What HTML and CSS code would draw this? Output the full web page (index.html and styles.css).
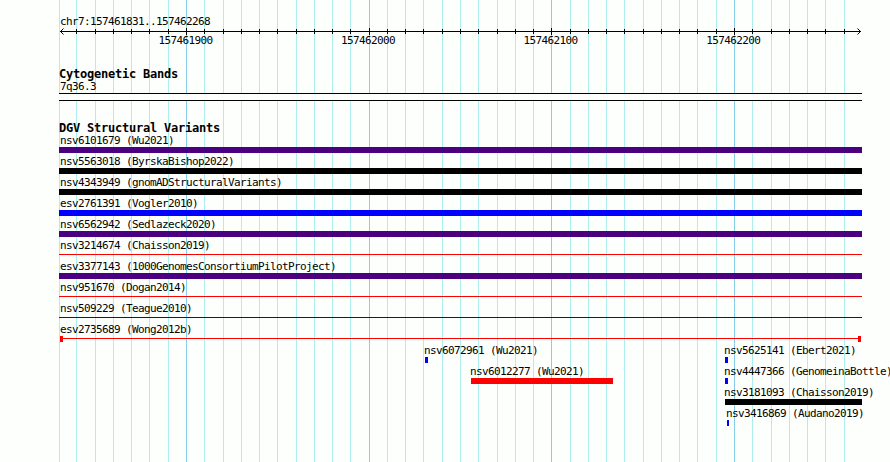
FILE: index.html
```
<!DOCTYPE html>
<html lang="en">
  <head>
    <meta charset="UTF-8" />
    <title>chr7:157461831..157462268</title>
    <link rel="stylesheet" href="styles.css">
  </head>
  <body>
    <div class="browser">
      <svg class="grid" width="890" height="462" shape-rendering="crispEdges">
        <path class="minor" d="M59.5 0V462M76.5 0V462M95.5 0V462M113.5 0V462M131.5 0V462M149.5 0V462M168.5 0V462M204.5 0V462M223.5 0V462M241.5 0V462M259.5 0V462M277.5 0V462M296.5 0V462M314.5 0V462M332.5 0V462M350.5 0V462M387.5 0V462M405.5 0V462M423.5 0V462M442.5 0V462M460.5 0V462M478.5 0V462M497.5 0V462M515.5 0V462M533.5 0V462M570.5 0V462M588.5 0V462M606.5 0V462M624.5 0V462M643.5 0V462M661.5 0V462M679.5 0V462M697.5 0V462M716.5 0V462M752.5 0V462M771.5 0V462M789.5 0V462M807.5 0V462M825.5 0V462M844.5 0V462" />
        <path class="major" d="M186.5 0V462M369.5 0V462M551.5 0V462M734.5 0V462" />
      </svg>

      <div class="tracks">
        <div class="region">chr7:157461831..157462268</div>
        <svg class="ruler" width="803" height="8" shape-rendering="crispEdges">
          <path d="M1 3.5H802" />
          <path d="M17.5 1V6M36.5 1V6M54.5 1V6M72.5 1V6M90.5 1V6M109.5 1V6M145.5 1V6M164.5 1V6M182.5 1V6M200.5 1V6M218.5 1V6M237.5 1V6M255.5 1V6M273.5 1V6M291.5 1V6M328.5 1V6M346.5 1V6M364.5 1V6M383.5 1V6M401.5 1V6M419.5 1V6M438.5 1V6M456.5 1V6M474.5 1V6M511.5 1V6M529.5 1V6M547.5 1V6M565.5 1V6M584.5 1V6M602.5 1V6M620.5 1V6M638.5 1V6M657.5 1V6M693.5 1V6M712.5 1V6M730.5 1V6M748.5 1V6M766.5 1V6M785.5 1V6" />
          <path d="M127.5 0V7M310.5 0V7M492.5 0V7M675.5 0V7" />
          <path d="M4.5 0.5L1.5 3.5L4.5 6.5M798.5 0.5L801.5 3.5L798.5 6.5" shape-rendering="auto" />
        </svg>
        <div class="ticks">
          <span>157461900</span>
          <span>157462000</span>
          <span>157462100</span>
          <span>157462200</span>
        </div>

        <h2>Cytogenetic Bands</h2>
        <div class="band-name">7q36.3</div>
        <div class="band"></div>

        <h2>DGV Structural Variants</h2>
        <div class="row"><div class="feature full"><span>nsv6101679 (Wu2021)</span><i class="bar purple"></i></div></div>
        <div class="row"><div class="feature full"><span>nsv5563018 (ByrskaBishop2022)</span><i class="bar black"></i></div></div>
        <div class="row"><div class="feature full"><span>nsv4343949 (gnomADStructuralVariants)</span><i class="bar black"></i></div></div>
        <div class="row"><div class="feature full"><span>esv2761391 (Vogler2010)</span><i class="bar blue"></i></div></div>
        <div class="row"><div class="feature full"><span>nsv6562942 (Sedlazeck2020)</span><i class="bar purple"></i></div></div>
        <div class="row"><div class="feature full"><span>nsv3214674 (Chaisson2019)</span><i class="line red"></i></div></div>
        <div class="row"><div class="feature full"><span>esv3377143 (1000GenomesConsortiumPilotProject)</span><i class="bar purple"></i></div></div>
        <div class="row"><div class="feature full"><span>nsv951670 (Dogan2014)</span><i class="line red"></i></div></div>
        <div class="row"><div class="feature full"><span>nsv509229 (Teague2010)</span><i class="line blue"></i></div></div>
        <div class="row">
          <div class="feature full">
            <span>esv2735689 (Wong2012b)</span>
            <div class="capped"><i class="cap red"></i><i class="join red"></i><i class="cap red"></i></div>
          </div>
        </div>
        <div class="row">
          <div class="feature" style="margin-left: 366px; width: 3px"><span>nsv6072961 (Wu2021)</span><i class="bar blue"></i></div>
          <div class="feature" style="margin-left: 297px; width: 3px"><span>nsv5625141 (Ebert2021)</span><i class="bar blue"></i></div>
        </div>
        <div class="row">
          <div class="feature" style="margin-left: 412px; width: 142px"><span>nsv6012277 (Wu2021)</span><i class="bar red"></i></div>
          <div class="feature" style="margin-left: 112px; width: 3px"><span>nsv4447366 (GenomeinaBottle)</span><i class="bar blue"></i></div>
        </div>
        <div class="row">
          <div class="feature" style="margin-left: 666px; width: 137px"><span>nsv3181093 (Chaisson2019)</span><i class="bar black"></i></div>
        </div>
        <div class="row">
          <div class="feature" style="margin-left: 668px; width: 2px"><span>nsv3416869 (Audano2019)</span><i class="bar blue"></i></div>
        </div>
      </div>
    </div>
  </body>
</html>
```

FILE: styles.css
```
body {
  margin: 0;
  background-color: #fdfffc;
  color: #000;
  font-family: "DejaVu Sans Mono", monospace;
  font-size: 11px;
  line-height: 13px;
  letter-spacing: -0.622px;
}
.browser {
  position: relative;
  width: 890px;
  height: 462px;
  overflow: hidden;
}
/* guide lines run behind every track */
.grid {
  position: absolute;
  top: 0;
  left: 0;
}
.grid path {
  stroke-width: 1;
}
.minor {
  stroke: #afeeee;
}
.major {
  stroke: #87ceeb;
}
.tracks {
  position: relative;
  width: 803px;
  padding: 15px 0 0 59px;
}
.region {
  height: 13px;
  padding-left: 1px;
}
.ruler {
  display: block;
}
.ruler path {
  fill: none;
  stroke: #000;
}
.ticks {
  display: flex;
  gap: 128.6px;
  height: 32px;
  margin-top: -2px;
  padding-left: 99.4px;
}
.ticks span {
  width: 54px;
  white-space: nowrap;
}
h2 {
  height: 12px;
  margin: 0;
  margin-top: 2px;
  font-size: 12px;
  font-weight: bold;
  letter-spacing: -0.224px;
}
.band-name {
  height: 13px;
  padding-left: 1px;
}
.band {
  height: 6px;
  margin-bottom: 21px;
  border: solid #000;
  border-width: 1px 0;
  background-color: #fdfffc;
}
.row {
  display: flex;
  height: 21px;
}
.feature {
  display: flex;
  flex: none;
  flex-direction: column;
  white-space: nowrap;
}
.feature span {
  height: 13px;
  margin-left: -1px;
}
.full {
  width: 803px;
}
.full span {
  margin-left: 1px;
}
.bar {
  height: 6px;
}
.line {
  height: 1px;
  margin-top: 2px;
}
.capped {
  display: flex;
  padding: 0 1px;
}
.cap {
  width: 3px;
  height: 6px;
}
.join {
  flex: 1;
  height: 1px;
  margin-top: 2px;
}
.purple {
  background-color: #4b0082;
}
.black {
  background-color: #000;
}
.blue {
  background-color: #00f;
}
.red {
  background-color: #f00;
}
```
